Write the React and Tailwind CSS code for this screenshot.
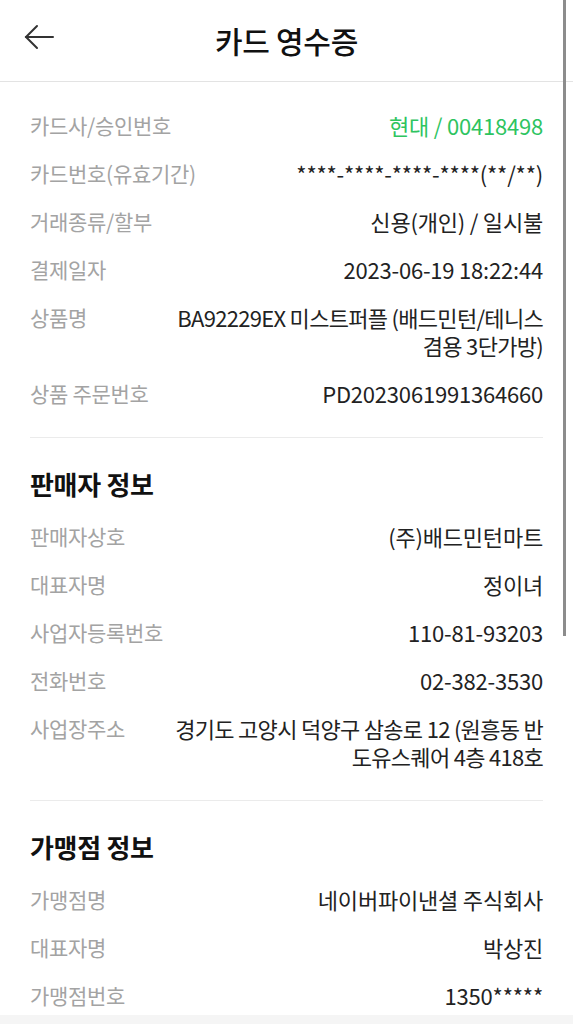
const font = { fontFamily: '"Noto Sans CJK KR", "Noto Sans", sans-serif' }

function Row({ label, children, green, tight }) {
  return (
    <div className="flex items-start justify-between py-[10px]">
      <span className="shrink-0 text-[21px] leading-[28px] text-[#a3a3a3] tracking-[-0.3px]">{label}</span>
      <span
        className={`flex-1 pl-4 text-right text-[22px] leading-[28px] ${tight ? 'tracking-[-0.7px]' : 'tracking-[-0.2px]'} ${
          green ? 'text-[#2ec45f]' : 'text-[#222222]'
        }`}
      >
        {children}
      </span>
    </div>
  )
}

function Section({ title, children, last }) {
  return (
    <div className={`pt-[30px] ${last ? '' : 'pb-[20px] border-b border-[#ebebeb]'}`}>
      <h2 className="text-[26px] leading-[32px] font-bold text-[#111111] mb-[12px] tracking-[-0.3px]">{title}</h2>
      {children}
    </div>
  )
}

export default function App() {
  return (
    <div style={font} className="relative h-screen overflow-hidden bg-white">
      <header className="relative flex items-center justify-center h-[82px] border-b border-[#e3e3e3]">
        <button className="absolute left-[23px] top-[24px] p-0">
          <svg width="32" height="26" viewBox="0 0 32 26" fill="none" stroke="#333333" strokeWidth="2" strokeLinecap="round">
            <path d="M3 13H30" />
            <path d="M14 2L3 13L14 24" />
          </svg>
        </button>
        <h1 className="text-[30px] font-medium text-[#111111] tracking-[-0.3px]">카드 영수증</h1>
      </header>

      <main className="px-[30px]">
        <div className="pt-[19px] pb-[20px] border-b border-[#ebebeb]">
          <Row label="카드사/승인번호" green>
            현대 / 00418498
          </Row>
          <Row label="카드번호(유효기간)">****-****-****-****(**/**)</Row>
          <Row label="거래종류/할부">신용(개인) / 일시불</Row>
          <Row label="결제일자">2023-06-19 18:22:44</Row>
          <Row label="상품명" tight>
            BA92229EX 미스트퍼플 (배드민턴/테니스
            <br />
            겸용 3단가방)
          </Row>
          <Row label="상품 주문번호">PD2023061991364660</Row>
        </div>

        <Section title="판매자 정보">
          <Row label="판매자상호">(주)배드민턴마트</Row>
          <Row label="대표자명">정이녀</Row>
          <Row label="사업자등록번호">110-81-93203</Row>
          <Row label="전화번호">02-382-3530</Row>
          <Row label="사업장주소" tight>
            경기도 고양시 덕양구 삼송로 12 (원흥동 반
            <br />
            도유스퀘어 4층 418호
          </Row>
        </Section>

        <Section title="가맹점 정보" last>
          <Row label="가맹점명">네이버파이낸셜 주식회사</Row>
          <Row label="대표자명">박상진</Row>
          <Row label="가맹점번호">1350*****</Row>
        </Section>
      </main>

      <div className="h-[200px] bg-[#f5f5f5] -mt-[4px]" />

      <div className="absolute right-[7px] top-0 w-[3px] h-[636px] bg-[#8c8c8c]" />
    </div>
  )
}
